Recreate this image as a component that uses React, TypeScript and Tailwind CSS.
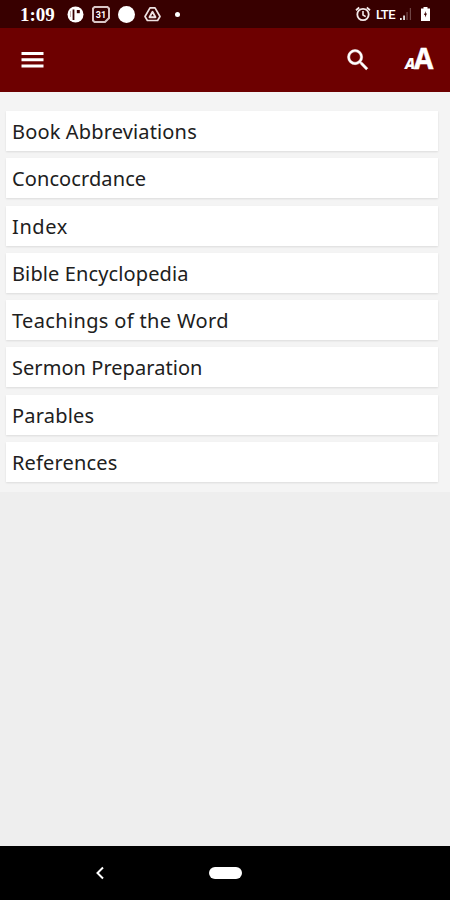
const topics = [
  { label: 'Book Abbreviations', tracking: 'tracking-[0.15px]' },
  { label: 'Concocrdance', tracking: 'tracking-[0.1px]' },
  { label: 'Index', tracking: 'tracking-[0.6px]' },
  { label: 'Bible Encyclopedia', tracking: 'tracking-[0.12px]' },
  { label: 'Teachings of the Word', tracking: 'tracking-[0.35px]' },
  { label: 'Sermon Preparation', tracking: 'tracking-[0.05px]' },
  { label: 'Parables', tracking: 'tracking-[0.2px]' },
  { label: 'References', tracking: 'tracking-[0.17px]' },
];

function StatusBar() {
  return (
    <div className="flex h-[28px] shrink-0 items-center bg-[#380000] pl-[20px] pr-[19px] text-white">
      <span className="w-[47px] font-['Liberation_Serif',serif] text-[19px] font-bold leading-none">1:09</span>
      <svg width="17" height="17" viewBox="0 0 17 17" fill="none">
        <circle cx="8.5" cy="8.5" r="8" fill="#fff" />
        <path d="M6.500 3.500v10.500" stroke="#380000" strokeWidth="1.800" />
        <path d="M9.800 4h3v3.200h-3z" fill="#380000" />
        <path d="M3.500 5v6" stroke="#b99b9b" strokeWidth="0.800" />
      </svg>
      <svg className="ml-[8px]" width="18" height="17" viewBox="0 0 18 17" fill="none">
        <path d="M2.500 1h13l1.500 1.500v9.500l-4 4h-10.500l-1.500-1.500v-12z" stroke="#d9c6c6" strokeWidth="2" />
        <text x="9" y="11.800" textAnchor="middle" fontSize="9" fontWeight="700" fontFamily="Roboto, sans-serif" fill="#fff">31</text>
      </svg>
      <span className="ml-[8px] size-[17px] rounded-full bg-white" />
      <svg className="ml-[9px]" width="17" height="17" viewBox="0 0 17 17" fill="none" stroke="#eee2e2" strokeLinejoin="round">
        <path d="M6 1.800h5l5 8.700-2.400 4h-10.200l-2.400-4z" strokeWidth="1.700" />
        <path d="M8.500 5.800l3 5.400h-6z" strokeWidth="1.900" />
      </svg>
      <span className="ml-[14px] size-[5px] rounded-full bg-white" />

      <svg className="ml-auto" width="16" height="16" viewBox="0 0 16 16" fill="none" stroke="#f4eaea">
        <circle cx="8" cy="8.500" r="5.700" strokeWidth="1.800" />
        <path d="M1 4.200l3.200-2.700M15 4.200l-3.200-2.700" strokeWidth="1.800" />
        <path d="M8 5v4l2.700 1.600" strokeWidth="1.600" />
      </svg>
      <span className="ml-[5px] w-[22px] font-[Roboto,sans-serif] text-[13px] font-medium leading-none tracking-[-0.6px]">LTE</span>
      <svg className="ml-[1px]" width="13" height="14" viewBox="0 0 13 14">
        <path d="M1 11h1.700v2H1zM4.200 8.500h1.700V13H4.200z" fill="#eee" />
        <path d="M7.400 5h1.300v8H7.400zM10.800 1h1.200v12h-1.200z" fill="#704545" />
      </svg>
      <svg className="ml-[8px]" width="11" height="16" viewBox="0 0 11 16">
        <path d="M3.500 1h4v1.500H10V15H1V2.500h2.500z" fill="#fff" />
        <path d="M5.700 5L4 9h1.100v2.500L7 7.500H5.700z" fill="#380000" />
      </svg>
    </div>
  );
}

function AppBar() {
  return (
    <header className="flex h-[64px] shrink-0 items-center bg-[#6d0000] pl-[21px] pr-[17px] text-white">
      <svg width="23" height="18" viewBox="0 0 23 18" fill="#fff">
        <path d="M0.500 1h22v3h-22zM0.500 7.300h22v3h-22zM0.500 13.500h22v3h-22z" />
      </svg>
      <svg className="ml-auto" width="28" height="28" viewBox="0 0 24 24" fill="#fff" stroke="#fff" strokeWidth="0.400">
        <path d="M15.500 14h-.79l-.28-.27A6.471 6.471 0 0 0 16 9.500 6.500 6.500 0 1 0 9.500 16c1.610 0 3.090-.59 4.230-1.570l.27.28v.79l5 4.990L20.490 19l-4.990-5zm-6 0C7.010 14 5 11.990 5 9.500S7.010 5 9.500 5 14 7.010 14 9.500 11.990 14 9.500 14z" />
      </svg>
      <div className="mb-[4px] ml-[33px] flex w-[28px] items-baseline font-['Open_Sans',sans-serif] font-bold leading-none">
        <span className="w-[9px] text-[15px] font-extrabold italic">A</span>
        <span className="text-[28px] [-webkit-text-stroke:0.5px_white]">A</span>
      </div>
    </header>
  );
}

export default function App() {
  return (
    <div className="flex h-[900px] w-[450px] flex-col overflow-hidden bg-[#eeeeee]">
      <StatusBar />
      <AppBar />
      <main className="flex h-[400px] shrink-0 flex-col gap-[7.3px] bg-[#f4f4f4] pl-[6px] pr-[12px] pt-[19px]">
        {topics.map((topic) => (
          <div
            key={topic.label}
            className="flex h-[40px] shrink-0 items-center bg-white pl-[6px] pt-[2px] shadow-[0_1px_2px_rgba(0,0,0,0.1)]"
          >
            <span className={`whitespace-nowrap font-['Noto_Sans',sans-serif] text-[20px] leading-none text-[#202020] ${topic.tracking}`}>
              {topic.label}
            </span>
          </div>
        ))}
      </main>
      <nav className="mt-auto flex h-[54px] shrink-0 items-center bg-black pl-[95px]">
        <svg width="10" height="14" viewBox="0 0 10 14" fill="none" stroke="#fff" strokeWidth="2">
          <path d="M8 1.500L2.500 7 8 12.500" />
        </svg>
        <span className="ml-[104px] h-[12px] w-[33px] rounded-full bg-white" />
      </nav>
    </div>
  );
}
